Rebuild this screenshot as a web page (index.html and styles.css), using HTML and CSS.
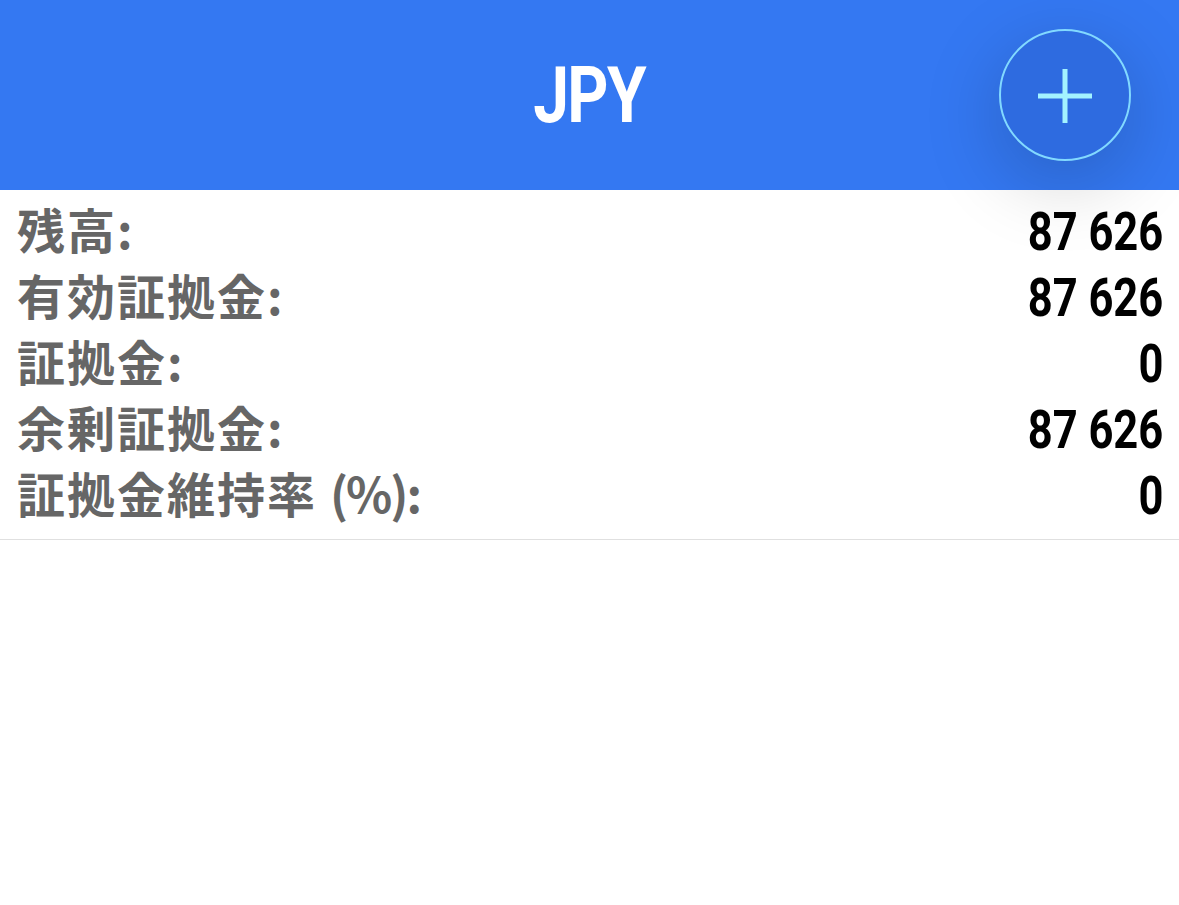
FILE: index.html
```html
<!DOCTYPE html>
<html lang="ja">
<head>
<meta charset="utf-8">
<link rel="stylesheet" href="styles.css">
</head>
<body>
<header class="topbar">
  <h1 class="title">JPY</h1>
  <button class="fab" aria-label="add">
    <svg width="56" height="56" viewBox="0 0 56 56"><path d="M28 2V56M1 29H55" stroke="#a3f3ff" stroke-width="5" fill="none"/></svg>
  </button>
</header>
<main class="list">
  <div class="row"><span class="label">残高:</span><span class="value">87 626</span></div>
  <div class="row"><span class="label">有効証拠金:</span><span class="value">87 626</span></div>
  <div class="row"><span class="label">証拠金:</span><span class="value">0</span></div>
  <div class="row"><span class="label">余剰証拠金:</span><span class="value">87 626</span></div>
  <div class="row"><span class="label">証拠金維持率 <span class="latin">(%)</span>:</span><span class="value">0</span></div>
</main>
</body>
</html>
```
FILE: styles.css
```css
html, body {
  margin: 0;
  padding: 0;
  background: #ffffff;
}
.topbar {
  position: relative;
  height: 190px;
  background: #3478f2;
  display: flex;
  align-items: center;
  justify-content: center;
  z-index: 2;
}
.title {
  margin: 0;
  color: #ffffff;
  font-family: "Roboto", "Liberation Sans", sans-serif;
  font-weight: 700;
  font-size: 78px;
  letter-spacing: -2px;
  line-height: 1;
  padding-top: 2px;
  transform: scaleX(0.82);
}
.fab {
  position: absolute;
  right: 48px;
  top: 29px;
  width: 132px;
  height: 132px;
  box-sizing: border-box;
  border-radius: 50%;
  border: 2px solid #82d9ff;
  background: #2e6be0;
  box-shadow: 0 20px 80px rgba(0, 0, 0, 0.2);
  padding: 0;
  display: flex;
  align-items: center;
  justify-content: center;
}
.list {
  position: relative;
  z-index: 1;
  padding: 9px 16px 10px 17px;
  border-bottom: 1px solid #e0e0e0;
}
.row {
  height: 66px;
  display: flex;
  align-items: center;
  justify-content: space-between;
}
.label {
  color: #666666;
  font-family: "Noto Sans CJK JP", "Noto Sans", sans-serif;
  font-weight: 700;
  font-size: 48px;
  line-height: 66px;
  letter-spacing: 2px;
  margin-bottom: 8px;
}
.latin {
  letter-spacing: -2px;
}
.value {
  color: #000000;
  font-family: "Roboto", "Liberation Sans", sans-serif;
  font-weight: 700;
  font-size: 53px;
  line-height: 66px;
  transform: scaleX(0.82);
  transform-origin: right center;
}
```
